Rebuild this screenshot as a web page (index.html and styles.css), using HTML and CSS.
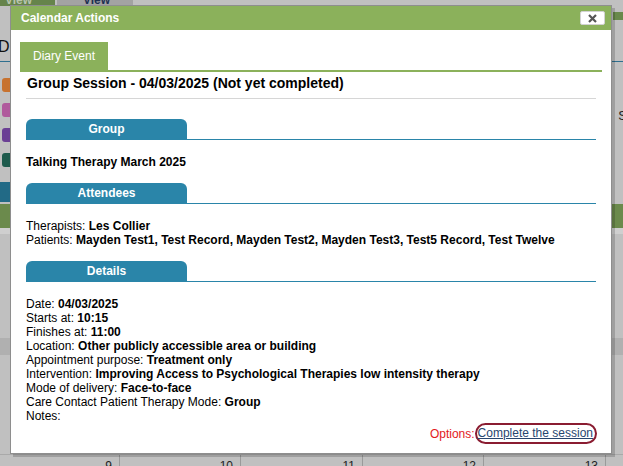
FILE: index.html
```html
<!DOCTYPE html>
<html lang="en">
<head>
<meta charset="utf-8">
<title>Calendar Actions</title>
<link rel="stylesheet" href="styles.css">
</head>
<body>
<div class="page">
  <div class="top-tabs">
    <div class="ptab ptab-a"><span>View</span></div>
    <div class="ptab ptab-b"><span>View</span></div>
  </div>
  <div class="stub-row"><div class="stub"></div></div>
  <div class="big-letter">D</div>
  <div class="rule"></div>
  <div class="swatches">
    <div class="sw-row"><div class="sw sw-orange"></div></div>
    <div class="sw-row"><div class="sw sw-pink"></div><div class="s-letter">S</div></div>
    <div class="sw-row"><div class="sw sw-purple"></div></div>
    <div class="sw-row"><div class="sw sw-teal"></div></div>
  </div>
  <div class="bluebar"></div>
  <div class="greenbar"></div>
  <div class="lightband"></div>
  <div class="darkband"></div>
  <div class="cal-row">
    <div class="cell c1">9</div>
    <div class="cell c2">10</div>
    <div class="cell c3">11</div>
    <div class="cell c4">12</div>
    <div class="cell c5">13</div>
  </div>
</div>

<div class="dialog">
  <div class="titlebar">
    <span class="title">Calendar Actions</span>
    <span class="close"><svg width="9" height="9" viewBox="0 0 9 9"><path d="M1 1 L8 8 M8 1 L1 8" stroke="#555" stroke-width="2.2" fill="none"/></svg></span>
  </div>
  <div class="dbody">
    <div class="tabrow"><div class="tab">Diary Event</div></div>
    <div class="panel">
      <div class="heading">Group Session - 04/03/2025 (Not yet completed)</div>

      <div class="section first">
        <div class="sec-head"><div class="sec-tab">Group</div></div>
        <div class="sec-body"><b>Talking Therapy March 2025</b></div>
      </div>

      <div class="section">
        <div class="sec-head"><div class="sec-tab">Attendees</div></div>
        <div class="sec-body">
          <div>Therapists: <b>Les Collier</b></div>
          <div>Patients: <b>Mayden Test1, Test Record, Mayden Test2, Mayden Test3, Test5 Record, Test Twelve</b></div>
        </div>
      </div>

      <div class="section">
        <div class="sec-head"><div class="sec-tab">Details</div></div>
        <div class="sec-body">
          <div>Date: <b>04/03/2025</b></div>
          <div>Starts at: <b>10:15</b></div>
          <div>Finishes at: <b>11:00</b></div>
          <div>Location: <b>Other publicly accessible area or building</b></div>
          <div>Appointment purpose: <b>Treatment only</b></div>
          <div>Intervention: <b>Improving Access to Psychological Therapies low intensity therapy</b></div>
          <div>Mode of delivery: <b>Face-to-face</b></div>
          <div>Care Contact Patient Therapy Mode: <b>Group</b></div>
          <div>Notes:</div>
        </div>
      </div>

      <div class="options">
        <span class="opt-label">Options:</span><a class="opt-link" href="#">Complete the session</a>
      </div>
    </div>
  </div>
</div>
</body>
</html>
```

FILE: styles.css
```css
* { box-sizing: border-box; }
html, body { margin: 0; padding: 0; }
body {
  width: 623px;
  height: 466px;
  overflow: hidden;
  position: relative;
  background: #c0c0c0;
  font-family: "Liberation Sans", Arial, sans-serif;
  font-size: 12px;
  color: #000;
}

/* background page (dimmed) */
.page { display: flex; flex-direction: column; height: 466px; overflow: hidden; }
.top-tabs { display: flex; gap: 2px; height: 6px; }
.ptab { height: 6px; overflow: hidden; display: flex; align-items: flex-end; font-weight: bold; font-size: 12px; }
.ptab span { display: block; line-height: 12px; }
.ptab-a { width: 55px; background: #66844b; color: #b9c4ae; padding-left: 5px; }
.ptab-b { width: 76px; background: #a3a3a3; color: #1d2f52; padding-left: 26px; }
.stub-row { margin-top: 6px; height: 8px; display: flex; justify-content: flex-end; }
.stub { width: 10px; background: #69894b; }
.big-letter { margin-top: 20px; height: 14px; line-height: 14px; font-size: 16px; margin-left: -2px; color: #111; }
.rule { margin-top: 7px; height: 1px; background: #2f6f8f; }
.swatches { margin-top: 16px; display: flex; flex-direction: column; gap: 11px; }
.sw-row { height: 14px; display: flex; justify-content: space-between; }
.sw { width: 8px; margin-left: 2px; border-radius: 3px 0 0 3px; }
.sw-orange { background: #c7722f; }
.sw-pink { background: #b05a9c; }
.sw-purple { background: #6a3f94; }
.sw-teal { background: #1e5b4d; }
.s-letter { font-size: 13px; line-height: 14px; margin-top: 6px; margin-right: -4px; color: #222; }
.bluebar { margin-top: 15px; height: 21px; width: 40px; background: #226a86; }
.greenbar { margin-top: 2px; height: 25px; background: #6b8a4c; }
.lightband { height: 6px; background: #cfcfcf; }
.darkband { margin-top: 104px; height: 18px; background: #b0b0b0; }
.cal-row { margin-top: 99px; display: flex; height: 12px; border-top: 1px solid #a9a9a9; }
.cell { border-right: 1px solid #9a9a9a; text-align: right; padding: 5px 7px 0 0; line-height: 12px; font-size: 12px; color: #222; overflow: hidden; }
.c1 { width: 120px; }
.c2 { width: 121px; }
.c3 { width: 122px; }
.c4 { width: 121px; }
.c5 { width: 122px; }

/* dialog */
.dialog {
  position: absolute;
  left: 10px;
  top: 5px;
  width: 602px;
  height: 449px;
  background: #fff;
  border: 1px solid #8e8e8e;
  box-shadow: 3px 3px 0 rgba(0, 0, 0, 0.17);
  display: flex;
  flex-direction: column;
}
.titlebar {
  height: 24px;
  background: #8bb15b;
  display: flex;
  align-items: center;
  justify-content: space-between;
  padding: 0 6px 0 10px;
  color: #fff;
  font-weight: bold;
  font-size: 12px;
}
.close {
  width: 25px;
  height: 14px;
  background: #fff;
  border: 1px solid #d2d2d2;
  border-radius: 2px;
  display: flex;
  align-items: center;
  justify-content: center;
}
.close svg { display: block; }
.dbody { padding: 12px 9px 0; flex: 1; display: flex; flex-direction: column; }
.tabrow { display: flex; border-bottom: 2px solid #8bb15b; }
.tab { background: #8bb15b; color: #fff; height: 28px; line-height: 28px; padding: 0 13px; font-size: 12px; }
.panel { padding: 3px 6px 0; }
.heading { font-size: 14px; font-weight: bold; line-height: 16px; padding: 0 1px 7px; border-bottom: 1px solid #d6d6d6; }
.section { margin-top: 14px; }
.section.first { margin-top: 20px; }
.sec-head { display: flex; border-bottom: 1px solid #2a85a9; }
.sec-tab {
  width: 161px;
  height: 20px;
  line-height: 20px;
  background: #2a85a9;
  color: #fff;
  font-weight: bold;
  text-align: center;
  border-radius: 6px 6px 0 0;
}
.sec-body { margin-top: 15px; line-height: 14px; }
.options { display: flex; justify-content: flex-end; align-items: center; margin-right: -1px; }
.opt-label { color: #e3191c; }
.opt-link {
  display: inline-block;
  border: 2px solid #8a1c31;
  border-radius: 11px;
  padding: 0 2px 0 1px;
  line-height: 17px;
  color: #28466f;
  text-decoration: underline;
}
```
